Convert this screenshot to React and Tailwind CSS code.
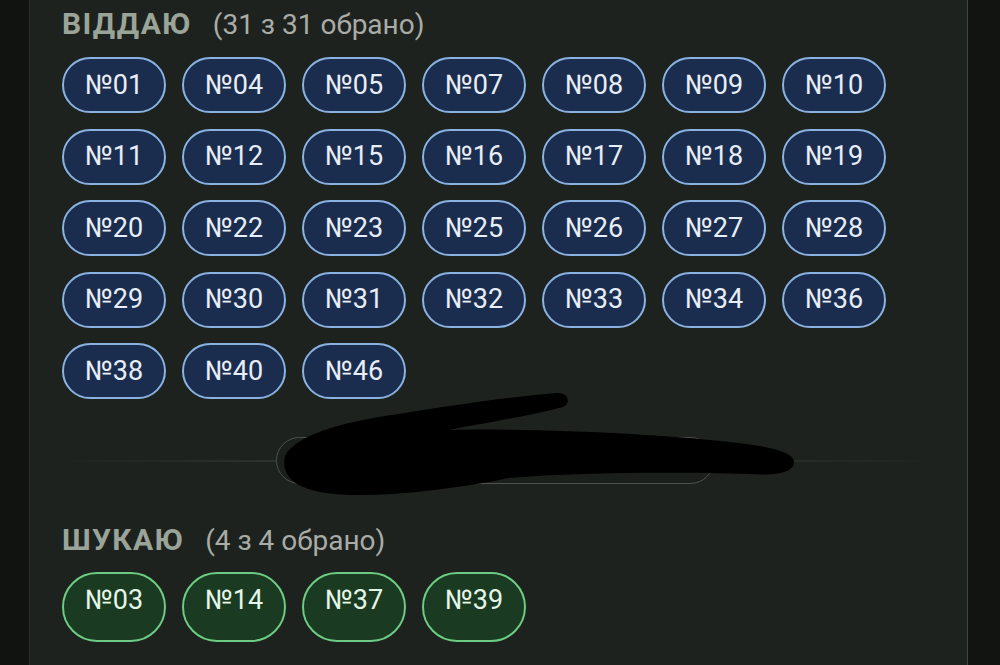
import React from "react";

const giving = [
  "01", "04", "05", "07", "08", "09", "10",
  "11", "12", "15", "16", "17", "18", "19",
  "20", "22", "23", "25", "26", "27", "28",
  "29", "30", "31", "32", "33", "34", "36",
  "38", "40", "46",
];

const seeking = ["03", "14", "37", "39"];

function Chip({ num, tone }) {
  if (tone === "blue") {
    return (
      <div className="w-[104px] h-[56px] rounded-full border-2 border-[#8ab2e0] bg-[#1b2d4e] text-[#e8eef7] flex items-center justify-center text-[27px] leading-none">
        №{num}
      </div>
    );
  }
  return (
    <div className="w-[104px] h-[70px] rounded-full border-2 border-[#6dcc84] bg-[#1b3a22] text-[#e4f6e7] flex items-center justify-center pb-[14px] text-[27px] leading-none">
      №{num}
    </div>
  );
}

function Heading({ title, count }) {
  return (
    <div className="flex items-baseline h-[46px] gap-[21px]">
      <span className="text-[30px] font-bold tracking-[1.3px] text-[#9ba498]">{title}</span>
      <span className="text-[28px] text-[#a9aca7]">{count}</span>
    </div>
  );
}

function Divider() {
  return (
    <div className="relative h-[118px] -ml-[8px] mr-[28px]">
      <div className="absolute left-0 right-0 top-[61px] h-[2px] bg-gradient-to-r from-transparent via-[#3d433e] to-transparent" />
      <div className="absolute left-[222px] top-[38px] w-[438px] h-[47px] rounded-full border border-[#4c524d] bg-[#1a1f1c]" />
      {/* marker scribble over the centre control */}
      <svg
        className="absolute left-[225px] top-[-9px]"
        width="530"
        height="115"
        viewBox="0 0 530 115"
      >
        <path
          d="M 6 66 C 16 46, 60 32, 120 24 C 180 14, 240 6, 278 3 C 290 2, 292 14, 284 17 C 250 26, 200 34, 170 40 C 260 38, 380 44, 450 52 C 490 56, 515 62, 515 72 C 515 82, 500 86, 470 84 C 400 82, 300 82, 230 88 C 180 98, 120 106, 72 105 C 30 104, 0 94, 6 66 Z"
          fill="#000"
        />
      </svg>
    </div>
  );
}

export default function App() {
  return (
    <div
      className="w-[1000px] h-[665px] flex bg-[#111311] overflow-hidden"
      style={{ fontFamily: "Roboto, 'Noto Sans', sans-serif" }}
    >
      <div className="w-[30px] shrink-0 bg-[#111311] border-r border-[#2a2f2b]" />
      <div className="w-[938px] shrink-0 bg-[#1d221e] pl-[32px] pt-[1px] border-r border-[#3b4a3f]">
        <Heading title="ВІДДАЮ" count="(31 з 31 обрано)" />
        <div className="flex flex-wrap gap-x-[16px] gap-y-[15.5px] w-[840px] mt-[10px]">
          {giving.map((n) => (
            <Chip key={n} num={n} tone="blue" />
          ))}
        </div>
        <Divider />
        <Heading title="ШУКАЮ" count="(4 з 4 обрано)" />
        <div className="flex flex-wrap gap-x-[16px] mt-[9px]">
          {seeking.map((n) => (
            <Chip key={n} num={n} tone="green" />
          ))}
        </div>
      </div>
      <div className="flex-1 bg-[#121412]" />
    </div>
  );
}
